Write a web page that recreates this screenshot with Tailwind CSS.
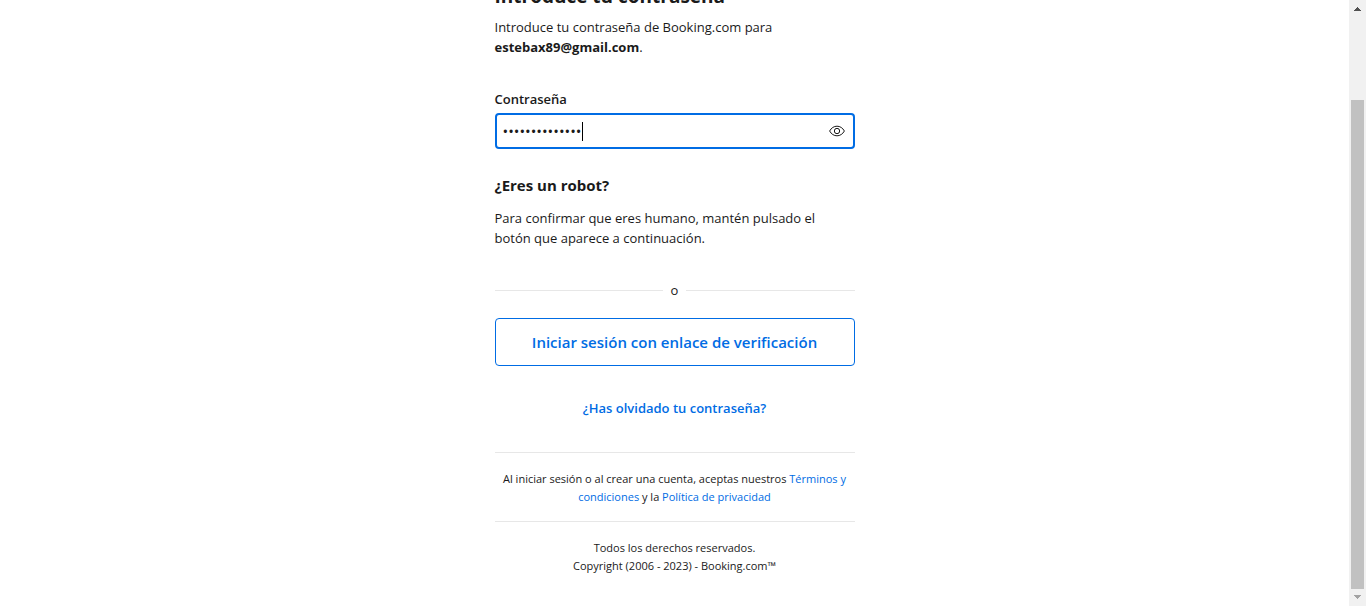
<!DOCTYPE html>
<html lang="es">
<head>
<meta charset="utf-8">
<meta name="viewport" content="width=device-width, initial-scale=1">
<title>Introduce tu contraseña</title>
<script src="https://cdn.jsdelivr.net/npm/@tailwindcss/browser@4"></script>
</head>
<body class="flex h-screen overflow-hidden bg-white font-['Open_Sans','Noto_Sans',sans-serif] text-[13px] leading-5 text-[#1a1a1a]">
  <main class="h-full flex-1 overflow-hidden px-4">
    <div class="mx-auto max-w-[360px]">
      <h1 class="-mt-[18px] text-[19px] leading-7 font-bold">Introduce tu contraseña</h1>
      <p class="mt-[7px]">Introduce tu contraseña de Booking.com para<br><strong class="font-bold">estebax89@gmail.com</strong>.</p>

      <form>
        <label for="password" class="mt-8 mb-1 block font-semibold">Contraseña</label>
        <div class="relative">
          <input id="password" type="password" value="abcdefghijklmn" class="block h-9 w-full rounded-sm border-2 border-[#006ce4] bg-white pr-10 pl-1.5 font-['Open_Sans',sans-serif] text-[15px] outline-none">
          <span class="absolute top-[9px] left-[87px] h-[19px] w-px bg-black"></span>
          <button type="button" aria-label="Mostrar contraseña" class="absolute top-2.5 right-2.5">
            <svg class="size-4" viewBox="0 0 24 24" fill="none" stroke="#1a1a1a" stroke-width="1.5"><path d="M.9 12C3.500 7.300 7.500 4.800 12 4.800S20.500 7.300 23.100 12C20.500 16.700 16.500 19.200 12 19.200S3.500 16.700.9 12z"/><circle cx="12" cy="12" r="4"/></svg>
          </button>
        </div>

        <h2 class="mt-[26px] text-[15px] font-bold">¿Eres un robot?</h2>
        <p class="mt-[13px]">Para confirmar que eres humano, mantén pulsado el<br>botón que aparece a continuación.</p>

        <div class="mt-8 flex items-center gap-2">
          <span class="h-px flex-1 bg-[#e7e7e7]"></span>
          <span>o</span>
          <span class="h-px flex-1 bg-[#e7e7e7]"></span>
        </div>
        <button type="button" class="mt-[18px] block h-12 w-full rounded-sm border border-[#006ce4] text-[15px] font-semibold text-[#006ce4]">Iniciar sesión con enlace de verificación</button>
      </form>

      <p class="mt-8 text-center"><a href="#" class="font-semibold text-[#006ce4]">¿Has olvidado tu contraseña?</a></p>

      <p class="mt-[34px] border-t border-[#e7e7e7] pt-[17px] pb-[15px] text-center text-[11px] leading-[18px]">Al iniciar sesión o al crear una cuenta, aceptas nuestros <a href="#" class="text-[#006ce4]">Términos y condiciones</a> y la <a href="#" class="text-[#006ce4]">Política de privacidad</a></p>
      <footer class="border-t border-[#e7e7e7] pt-[17px] text-center text-[11px] leading-[18px]">Todos los derechos reservados.<br>Copyright (2006 - 2023) - Booking.com™</footer>
    </div>
  </main>
  <div class="flex h-full w-[17px] flex-col items-center bg-[#f1f1f1]" aria-hidden="true">
    <svg class="h-[17px] w-[17px] shrink-0" viewBox="0 0 17 17" shape-rendering="crispEdges"><path d="M8 7h1v1h1v1h1v1h1v1H5v-1h1V9h1V8h1z" fill="#505050"/></svg>
    <div class="mt-[83px] w-[13px] flex-1 bg-[#c1c1c1]"></div>
    <svg class="h-[17px] w-[17px] shrink-0" viewBox="0 0 17 17" shape-rendering="crispEdges"><path d="M5 6h7v1h-1v1h-1v1H9v1H8V9H7V8H6V7H5z" fill="#a3a3a3"/></svg>
  </div>
</body>
</html>
